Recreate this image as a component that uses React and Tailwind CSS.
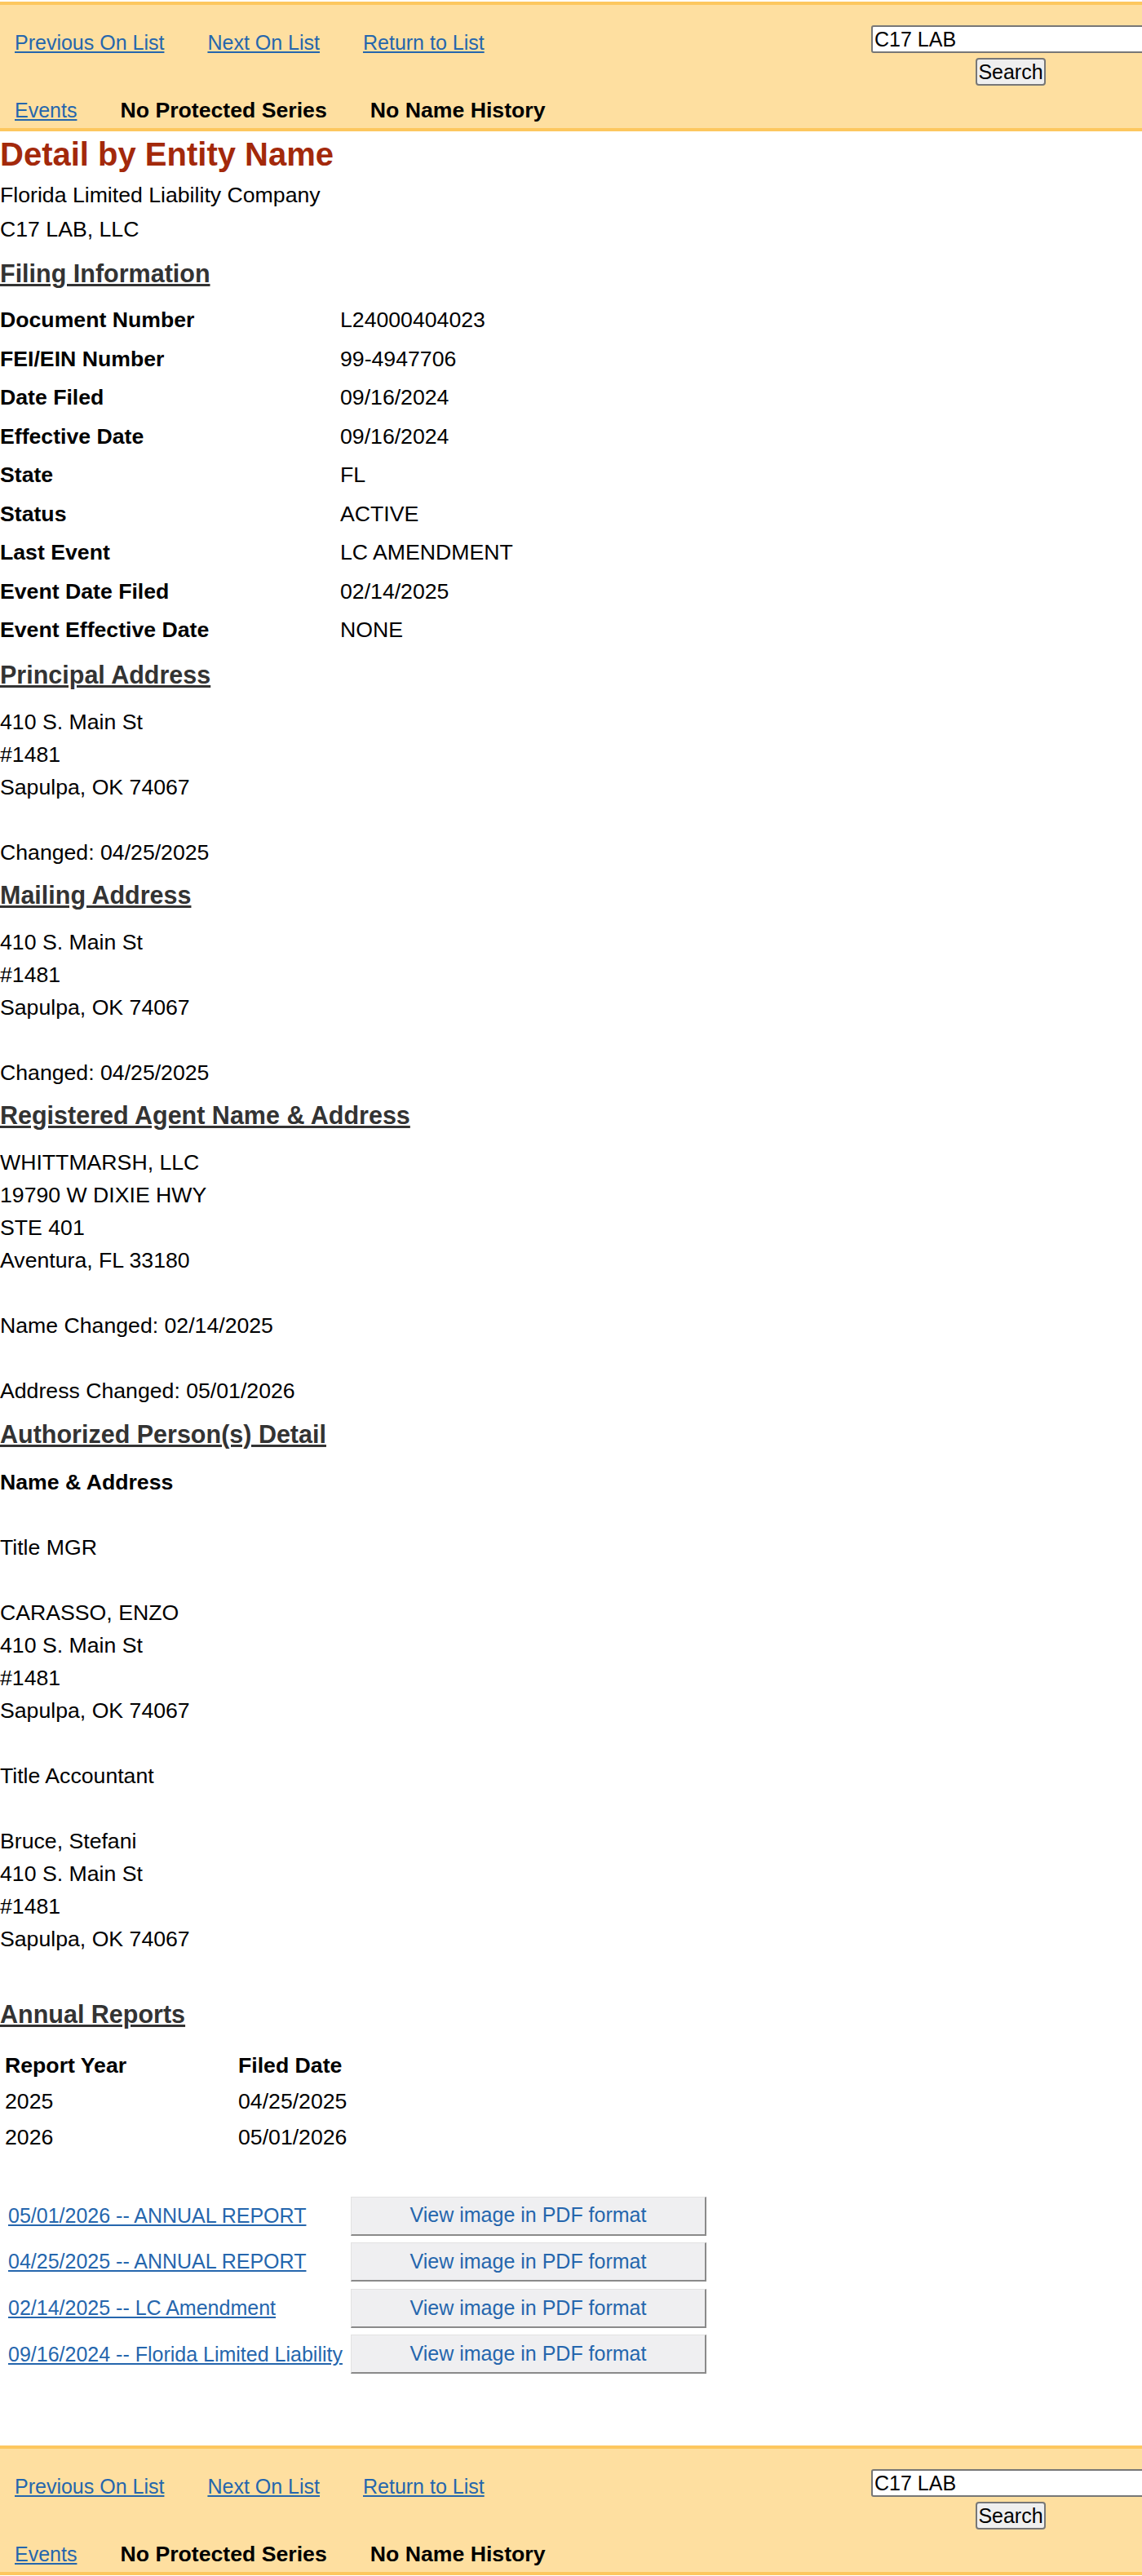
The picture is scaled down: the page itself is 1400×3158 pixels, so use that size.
import React from "react";

const filing = [
  ["Document Number", "L24000404023"],
  ["FEI/EIN Number", "99-4947706"],
  ["Date Filed", "09/16/2024"],
  ["Effective Date", "09/16/2024"],
  ["State", "FL"],
  ["Status", "ACTIVE"],
  ["Last Event", "LC AMENDMENT"],
  ["Event Date Filed", "02/14/2025"],
  ["Event Effective Date", "NONE"],
];

const reports = [
  ["2025", "04/25/2025"],
  ["2026", "05/01/2026"],
];

const docs = [
  "05/01/2026 -- ANNUAL REPORT",
  "04/25/2025 -- ANNUAL REPORT",
  "02/14/2025 -- LC Amendment",
  "09/16/2024 -- Florida Limited Liability",
];

function NavBar() {
  return (
    <div className="mt-[2px] overflow-hidden border-y-4 border-[#fdc75f] bg-[#fedfa0]">
      <div className="h-[151px]">
        <div className="flex items-start pt-[25px]">
          <div className="mt-[1px] flex gap-[53px] pl-[18px] text-[25px] leading-[40px]">
            <a href="#" className="text-[#2566ad] underline">Previous On List</a>
            <a href="#" className="text-[#2566ad] underline">Next On List</a>
            <a href="#" className="text-[#2566ad] underline">Return to List</a>
          </div>
          <div className="ml-auto mr-[-10px] flex w-[342px] shrink-0 flex-col items-center">
            <input
              readOnly
              value="C17 LAB"
              className="h-[34px] w-[342px] rounded-[3px] border-2 border-[#777] bg-white px-[2px] text-[25px] leading-none text-black"
            />
            <button className="mt-[6px] h-[34px] w-[86px] rounded-[4px] border-2 border-[#777] bg-[#efefef] text-[25px] leading-none text-black">
              Search
            </button>
          </div>
        </div>
        <div className="mt-[10px] flex gap-[53px] pl-[18px] text-[25px] leading-[40px]">
          <a href="#" className="text-[#2566ad] underline">Events</a>
          <span className="text-[26.67px] font-bold text-black">No Protected Series</span>
          <span className="text-[26.67px] font-bold text-black">No Name History</span>
        </div>
      </div>
    </div>
  );
}

function Heading({ children, className = "" }) {
  return (
    <h3 className={`text-[30.5px] font-bold leading-[40px] text-[#333] underline ${className}`}>
      {children}
    </h3>
  );
}

function Lines({ items, className = "" }) {
  return (
    <div className={`leading-[40px] ${className}`}>
      {items.map((t, i) => (
        <div key={i} className="h-[40px]">
          {t}
        </div>
      ))}
    </div>
  );
}

export default function App() {
  return (
    <div className="min-h-[3158px] overflow-x-hidden bg-white font-['Liberation_Sans',Arial,sans-serif] text-[26.67px] text-black">
      <NavBar />

      <main>
        <h2 className="mt-[4px] text-[40px] font-bold leading-[48px] text-[#a3290b]">Detail by Entity Name</h2>
        <div className="mt-[5px] leading-[42px]">
          <div>Florida Limited Liability Company</div>
          <div>C17 LAB, LLC</div>
        </div>

        <Heading className="mt-[13px]">Filing Information</Heading>
        <div className="mt-[14px] grid grid-cols-[417px_1fr]">
          {filing.map(([k, v]) => (
            <React.Fragment key={k}>
              <div className="font-bold leading-[47.5px]">{k}</div>
              <div className="leading-[47.5px]">{v}</div>
            </React.Fragment>
          ))}
        </div>

        <Heading className="mt-[10px]">Principal Address</Heading>
        <Lines className="mt-[18px]" items={["410 S. Main St", "#1481", "Sapulpa, OK 74067", "", "Changed: 04/25/2025"]} />

        <Heading className="mt-[12px]">Mailing Address</Heading>
        <Lines className="mt-[18px]" items={["410 S. Main St", "#1481", "Sapulpa, OK 74067", "", "Changed: 04/25/2025"]} />

        <Heading className="mt-[12px]">Registered Agent Name &amp; Address</Heading>
        <Lines
          className="mt-[18px]"
          items={[
            "WHITTMARSH, LLC",
            "19790 W DIXIE HWY",
            "STE 401",
            "Aventura, FL 33180",
            "",
            "Name Changed: 02/14/2025",
            "",
            "Address Changed: 05/01/2026",
          ]}
        />

        <Heading className="mt-[13px]">Authorized Person(s) Detail</Heading>
        <div className="mt-[19px] font-bold leading-[40px]">Name &amp; Address</div>
        <Lines
          items={[
            "",
            "Title MGR",
            "",
            "CARASSO, ENZO",
            "410 S. Main St",
            "#1481",
            "Sapulpa, OK 74067",
            "",
            "Title Accountant",
            "",
            "Bruce, Stefani",
            "410 S. Main St",
            "#1481",
            "Sapulpa, OK 74067",
          ]}
        />

        <Heading className="mt-[52px]">Annual Reports</Heading>
        <div className="mt-[21px] grid grid-cols-[286px_1fr] pl-[6px] leading-[44px]">
          <div className="font-bold">Report Year</div>
          <div className="font-bold">Filed Date</div>
          {reports.map(([y, d]) => (
            <React.Fragment key={y}>
              <div>{y}</div>
              <div>{d}</div>
            </React.Fragment>
          ))}
        </div>

        <div className="mt-[51px] flex flex-col gap-[8.67px]">
          {docs.map((d) => (
            <div key={d} className="flex items-center">
              <a href="#" className="w-[430px] shrink-0 whitespace-nowrap pl-[10px] text-[25px] text-[#2566ad] underline">
                {d}
              </a>
              <button className="h-[48px] w-[436px] border-b-2 border-l border-r-2 border-t border-b-[#8a8a8a] border-l-[#e2e2e2] border-r-[#8a8a8a] border-t-[#e2e2e2] bg-[#efeff1] text-center text-[25px] text-[#2566ad]">
                View image in PDF format
              </button>
            </div>
          ))}
        </div>
      </main>

      <div className="mt-[88px]">
        <NavBar />
      </div>
    </div>
  );
}
